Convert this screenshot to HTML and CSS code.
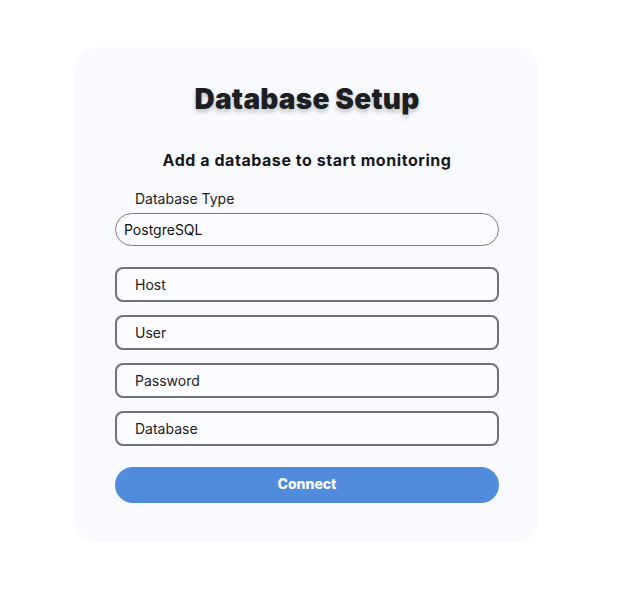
FILE: index.html
```html
<!DOCTYPE html>
<html>
<head>
<meta charset="utf-8">
<link rel="stylesheet" href="styles.css">
</head>
<body>
<div class="card">
  <h1 class="title">Database Setup</h1>
  <h2 class="subtitle">Add a database to start monitoring</h2>
  <form class="form">
    <div class="field">
      <label class="label">Database Type</label>
      <div class="select">PostgreSQL</div>
    </div>
    <div class="input">Host</div>
    <div class="input">User</div>
    <div class="input">Password</div>
    <div class="input">Database</div>
    <button type="button" class="btn">Connect</button>
  </form>
</div>
</body>
</html>
```

FILE: styles.css
```css
html, body {
  margin: 0;
  padding: 0;
  background: #ffffff;
}
body {
  font-family: Inter, "Noto Sans", sans-serif;
  color: #1f2328;
}
.card {
  box-sizing: border-box;
  width: 463px;
  height: 495px;
  margin: 47px 0 0 75px;
  padding: 35px 39px 0 40px;
  background: #f9fafe;
  border-radius: 22px;
}
.title {
  margin: 0;
  text-align: center;
  font-size: 28px;
  font-weight: 900;
  letter-spacing: 0.2px;
  line-height: 34px;
  color: #1b1e22;
  text-shadow: 0 3px 4px rgba(0,0,0,0.22);
}
.subtitle {
  margin: 34px 0 0;
  text-align: center;
  font-size: 16px;
  font-weight: 700;
  letter-spacing: 0.55px;
  line-height: 20px;
  color: #16181c;
}
.form {
  margin-top: 21px;
  display: flex;
  flex-direction: column;
}
.field {
  display: flex;
  flex-direction: column;
}
.label {
  padding-left: 20px;
  font-size: 14px;
  line-height: 16px;
  color: #222;
  margin-bottom: 6px;
}
.select {
  box-sizing: border-box;
  height: 33px;
  border: 1px solid #7a7d82;
  border-radius: 17px;
  padding: 0 8px;
  display: flex;
  align-items: center;
  font-size: 14px;
  color: #111;
  background: #fbfcff;
  margin-bottom: 21px;
}
.input {
  box-sizing: border-box;
  height: 35px;
  border: 2px solid #6f7278;
  border-radius: 8px;
  padding: 0 18px;
  display: flex;
  align-items: center;
  font-size: 14px;
  color: #222;
  background: #fbfcff;
  margin-bottom: 13px;
}
.btn {
  margin-top: 8px;
  height: 36px;
  padding: 0 0 3px;
  border: none;
  border-radius: 18px;
  background: #508bdc;
  color: #ffffff;
  font-family: Inter, "Noto Sans", sans-serif;
  font-size: 14px;
  font-weight: 800;
}
```
